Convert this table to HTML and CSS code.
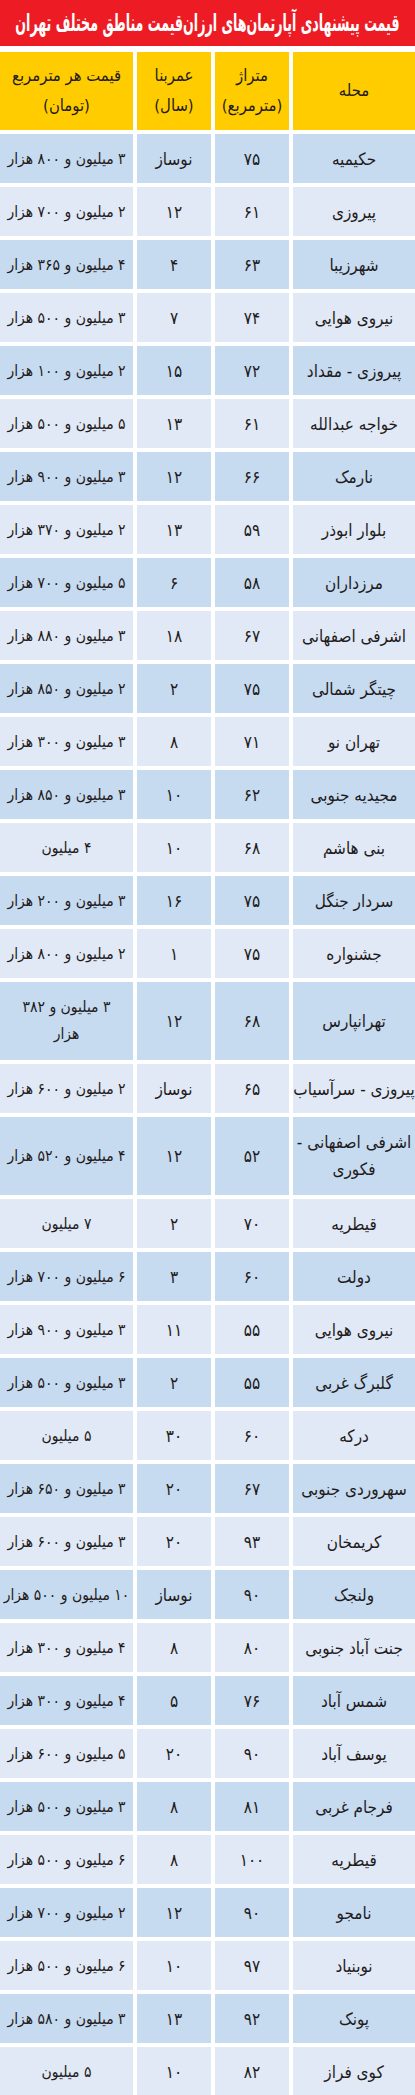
FILE: index.html
```html
<!DOCTYPE html>
<html lang="fa" dir="rtl">
<head>
<meta charset="utf-8">
<title>قیمت پیشنهادی آپارتمان‌های ارزان‌قیمت مناطق مختلف تهران</title>
<link rel="stylesheet" href="styles.css">
</head>
<body>
<div class="page">
  <h1 class="title"><span class="title-text">قیمت پیشنهادی آپارتمان‌های ارزان‌قیمت مناطق مختلف تهران</span></h1>
  <div class="grid">
    <div class="row head">
      <div class="cell">محله</div>
      <div class="cell">متراژ<br>(مترمربع)</div>
      <div class="cell">عمربنا<br>(سال)</div>
      <div class="cell price">قیمت هر مترمربع<br>(تومان)</div>
    </div>
    <div class="row dark"><div class="cell">حکیمیه</div><div class="cell">۷۵</div><div class="cell">نوساز</div><div class="cell price">۳ میلیون و ۸۰۰ هزار</div></div>
    <div class="row light"><div class="cell">پیروزی</div><div class="cell">۶۱</div><div class="cell">۱۲</div><div class="cell price">۲ میلیون و ۷۰۰ هزار</div></div>
    <div class="row dark"><div class="cell">شهرزیبا</div><div class="cell">۶۳</div><div class="cell">۴</div><div class="cell price">۴ میلیون و ۳۶۵ هزار</div></div>
    <div class="row light"><div class="cell">نیروی هوایی</div><div class="cell">۷۴</div><div class="cell">۷</div><div class="cell price">۳ میلیون و ۵۰۰ هزار</div></div>
    <div class="row dark"><div class="cell">پیروزی - مقداد</div><div class="cell">۷۲</div><div class="cell">۱۵</div><div class="cell price">۲ میلیون و ۱۰۰ هزار</div></div>
    <div class="row light"><div class="cell">خواجه عبدالله</div><div class="cell">۶۱</div><div class="cell">۱۳</div><div class="cell price">۵ میلیون و ۵۰۰ هزار</div></div>
    <div class="row dark"><div class="cell">نارمک</div><div class="cell">۶۶</div><div class="cell">۱۲</div><div class="cell price">۳ میلیون و ۹۰۰ هزار</div></div>
    <div class="row light"><div class="cell">بلوار ابوذر</div><div class="cell">۵۹</div><div class="cell">۱۳</div><div class="cell price">۲ میلیون و ۳۷۰ هزار</div></div>
    <div class="row dark"><div class="cell">مرزداران</div><div class="cell">۵۸</div><div class="cell">۶</div><div class="cell price">۵ میلیون و ۷۰۰ هزار</div></div>
    <div class="row light"><div class="cell">اشرفی اصفهانی</div><div class="cell">۶۷</div><div class="cell">۱۸</div><div class="cell price">۳ میلیون و ۸۸۰ هزار</div></div>
    <div class="row dark"><div class="cell">چیتگر شمالی</div><div class="cell">۷۵</div><div class="cell">۲</div><div class="cell price">۲ میلیون و ۸۵۰ هزار</div></div>
    <div class="row light"><div class="cell">تهران نو</div><div class="cell">۷۱</div><div class="cell">۸</div><div class="cell price">۳ میلیون و ۳۰۰ هزار</div></div>
    <div class="row dark"><div class="cell">مجیدیه جنوبی</div><div class="cell">۶۲</div><div class="cell">۱۰</div><div class="cell price">۳ میلیون و ۸۵۰ هزار</div></div>
    <div class="row light"><div class="cell">بنی هاشم</div><div class="cell">۶۸</div><div class="cell">۱۰</div><div class="cell price">۴ میلیون</div></div>
    <div class="row dark"><div class="cell">سردار جنگل</div><div class="cell">۷۵</div><div class="cell">۱۶</div><div class="cell price">۳ میلیون و ۲۰۰ هزار</div></div>
    <div class="row light"><div class="cell">جشنواره</div><div class="cell">۷۵</div><div class="cell">۱</div><div class="cell price">۲ میلیون و ۸۰۰ هزار</div></div>
    <div class="row dark tall"><div class="cell">تهرانپارس</div><div class="cell">۶۸</div><div class="cell">۱۲</div><div class="cell price">۳ میلیون و ۳۸۲<br>هزار</div></div>
    <div class="row light"><div class="cell">پیروزی - سرآسیاب</div><div class="cell">۶۵</div><div class="cell">نوساز</div><div class="cell price">۲ میلیون و ۶۰۰ هزار</div></div>
    <div class="row dark tall"><div class="cell">اشرفی اصفهانی -<br>فکوری</div><div class="cell">۵۲</div><div class="cell">۱۲</div><div class="cell price">۴ میلیون و ۵۲۰ هزار</div></div>
    <div class="row light"><div class="cell">قیطریه</div><div class="cell">۷۰</div><div class="cell">۲</div><div class="cell price">۷ میلیون</div></div>
    <div class="row dark"><div class="cell">دولت</div><div class="cell">۶۰</div><div class="cell">۳</div><div class="cell price">۶ میلیون و ۷۰۰ هزار</div></div>
    <div class="row light"><div class="cell">نیروی هوایی</div><div class="cell">۵۵</div><div class="cell">۱۱</div><div class="cell price">۳ میلیون و ۹۰۰ هزار</div></div>
    <div class="row dark"><div class="cell">گلبرگ غربی</div><div class="cell">۵۵</div><div class="cell">۲</div><div class="cell price">۳ میلیون و ۵۰۰ هزار</div></div>
    <div class="row light"><div class="cell">درکه</div><div class="cell">۶۰</div><div class="cell">۳۰</div><div class="cell price">۵ میلیون</div></div>
    <div class="row dark"><div class="cell">سهروردی جنوبی</div><div class="cell">۶۷</div><div class="cell">۲۰</div><div class="cell price">۳ میلیون و ۶۵۰ هزار</div></div>
    <div class="row light"><div class="cell">کریمخان</div><div class="cell">۹۳</div><div class="cell">۲۰</div><div class="cell price">۳ میلیون و ۶۰۰ هزار</div></div>
    <div class="row dark"><div class="cell">ولنجک</div><div class="cell">۹۰</div><div class="cell">نوساز</div><div class="cell price">۱۰ میلیون و ۵۰۰ هزار</div></div>
    <div class="row light"><div class="cell">جنت آباد جنوبی</div><div class="cell">۸۰</div><div class="cell">۸</div><div class="cell price">۴ میلیون و ۳۰۰ هزار</div></div>
    <div class="row dark"><div class="cell">شمس آباد</div><div class="cell">۷۶</div><div class="cell">۵</div><div class="cell price">۴ میلیون و ۳۰۰ هزار</div></div>
    <div class="row light"><div class="cell">یوسف آباد</div><div class="cell">۹۰</div><div class="cell">۲۰</div><div class="cell price">۵ میلیون و ۶۰۰ هزار</div></div>
    <div class="row dark"><div class="cell">فرجام غربی</div><div class="cell">۸۱</div><div class="cell">۸</div><div class="cell price">۳ میلیون و ۵۰۰ هزار</div></div>
    <div class="row light"><div class="cell">قیطریه</div><div class="cell">۱۰۰</div><div class="cell">۸</div><div class="cell price">۶ میلیون و ۵۰۰ هزار</div></div>
    <div class="row dark"><div class="cell">نامجو</div><div class="cell">۹۰</div><div class="cell">۱۲</div><div class="cell price">۲ میلیون و ۷۰۰ هزار</div></div>
    <div class="row light"><div class="cell">نوبنیاد</div><div class="cell">۹۷</div><div class="cell">۱۰</div><div class="cell price">۶ میلیون و ۵۰۰ هزار</div></div>
    <div class="row dark"><div class="cell">پونک</div><div class="cell">۹۲</div><div class="cell">۱۳</div><div class="cell price">۳ میلیون و ۵۸۰ هزار</div></div>
    <div class="row light"><div class="cell">کوی فراز</div><div class="cell">۸۲</div><div class="cell">۱۰</div><div class="cell price">۵ میلیون</div></div>
  </div>
</div>
</body>
</html>
```
FILE: styles.css
```css
html, body {
  margin: 0;
  padding: 0;
  background: #ffffff;
}
body {
  font-family: "DejaVu Sans Condensed", "DejaVu Sans", sans-serif;
  color: #1f1b1c;
  direction: rtl;
}
.page {
  width: 415px;
  overflow: hidden;
}
.title {
  margin: 0;
  height: 46px;
  background: #ed1c24;
  color: #ffffff;
  font-size: 24px;
  font-weight: bold;
  line-height: 46px;
  text-align: center;
  white-space: nowrap;
  display: flex;
  justify-content: center;
  align-items: center;
  overflow: hidden;
}
.title-text {
  display: inline-block;
  transform: scaleX(0.585);
  letter-spacing: -0.2px;
}
.grid {
  margin-top: 6px;
  display: grid;
  grid-template-columns: 122px 74px 74px 133px;
  column-gap: 4px;
  row-gap: 4px;
}
.row {
  display: contents;
}
.cell {
  height: 49px;
  display: flex;
  align-items: center;
  justify-content: center;
  text-align: center;
  font-size: 17px;
  line-height: 24px;
  white-space: nowrap;
}
.cell.price {
  font-size: 15.5px;
  letter-spacing: -0.2px;
}
.head .cell {
  height: 78px;
  background: #ffcc00;
  font-size: 16.5px;
  line-height: 30px;
}
.tall .cell {
  height: 78px;
  line-height: 27px;
}
.dark .cell {
  background: #c6daf0;
}
.light .cell {
  background: #e0e9f5;
}
```
